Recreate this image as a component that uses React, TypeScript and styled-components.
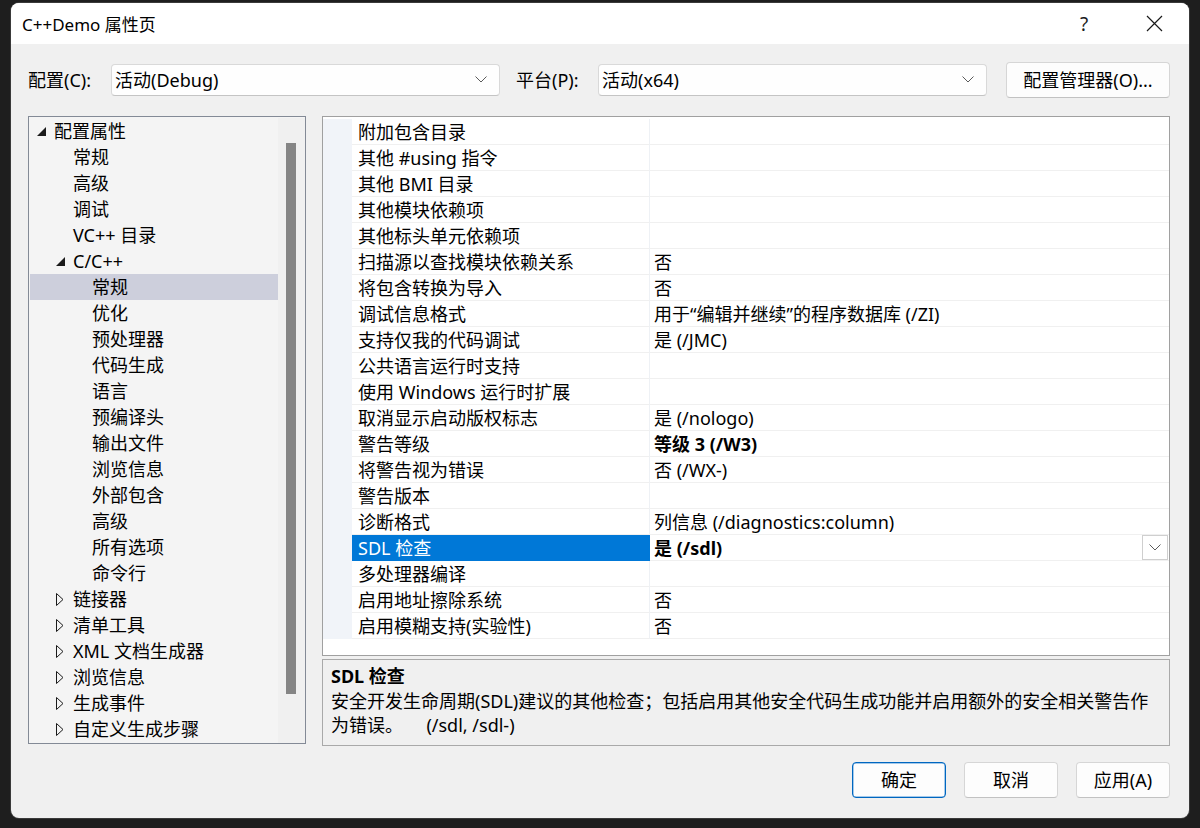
import React from 'react'
import styled, { createGlobalStyle, css } from 'styled-components'

const GlobalStyle = createGlobalStyle`
  html, body {
    margin: 0;
    padding: 0;
    background: #1e1e1e;
  }
  body {
    font-family: "Noto Sans", "Noto Sans CJK SC", sans-serif;
    color: #000;
  }
  * { box-sizing: border-box; }
`

const Backdrop = styled.div`
  width: 1200px;
  height: 828px;
  padding: 3px 11px 10px 11px;
  background: #1e1e1e;
  overflow: hidden;
`

const Dialog = styled.div`
  width: 1178px;
  height: 815px;
  border-radius: 8px;
  background: #f0f0f0;
  overflow: hidden;
  display: flex;
  flex-direction: column;
  box-shadow: 0 0 0 1px #3a3a3a;
`

const TitleBar = styled.div`
  height: 41px;
  flex: none;
  background: #ffffff;
  display: flex;
  align-items: center;
  padding-left: 11px;
`

const Title = styled.div`
  flex: 1;
  font-size: 17px;
  line-height: 20px;
  padding-top: 2px;
`

const CaptionButton = styled.div`
  width: 70px;
  height: 41px;
  display: flex;
  align-items: center;
  justify-content: center;
  font-size: 19px;
  color: #1a1a1a;
`

const Body = styled.div`
  flex: 1;
  display: flex;
  flex-direction: column;
  padding: 18px 19px 20px 17px;
`

const ConfigRow = styled.div`
  height: 35px;
  display: flex;
  align-items: center;
`

const FieldLabel = styled.div<{ $w: number; $gap?: number }>`
  width: ${(p) => p.$w}px;
  padding-left: ${(p) => p.$gap ?? 0}px;
  font-size: 18px;
  line-height: 22px;
  flex: none;
`

const Combo = styled.div`
  width: 389px;
  height: 32px;
  flex: none;
  background: #fefefe;
  border: 1px solid #d9d9d9;
  border-bottom-color: #c4c4c4;
  border-radius: 4px;
  display: flex;
  align-items: center;
  padding: 0 12px 0 3px;
  font-size: 18px;
`

const ComboText = styled.div`
  flex: 1;
  line-height: 22px;
`

const Spacer = styled.div`
  flex: 1;
`

const DialogButton = styled.div<{ $primary?: boolean; $w: number }>`
  width: ${(p) => p.$w}px;
  height: 36px;
  flex: none;
  background: #fdfdfd;
  border: 1px solid #d6d6d6;
  border-bottom-color: #c2c2c2;
  border-radius: 4px;
  display: flex;
  align-items: center;
  justify-content: center;
  font-size: 18px;
  line-height: 22px;
  ${(p) =>
    p.$primary &&
    css`
      border-color: #0067c0;
      box-shadow: inset 0 0 0 0.5px #4c96d8;
    `}
`

const Main = styled.div`
  margin-top: 19px;
  height: 630px;
  display: flex;
  gap: 16px;
`

const TreePanel = styled.div`
  width: 278px;
  height: 628px;
  flex: none;
  border: 1px solid #838a96;
  background: #f4f4f4;
  display: flex;
  padding: 1px 0 0 1px;
`

const TreeList = styled.div`
  flex: 1;
  display: flex;
  flex-direction: column;
`

const TreeRow = styled.div<{ $level: number; $selected?: boolean }>`
  height: 26px;
  flex: none;
  display: flex;
  align-items: center;
  padding-left: ${(p) => 7 + p.$level * 19}px;
  background: ${(p) => (p.$selected ? '#cdcfdc' : 'transparent')};
  font-size: 18px;
  line-height: 22px;
  white-space: nowrap;
`

const Expander = styled.div`
  width: 17px;
  height: 26px;
  flex: none;
  display: flex;
  align-items: center;
  justify-content: flex-start;
`

const ScrollTrack = styled.div`
  width: 27px;
  flex: none;
  background: #f0f0f0;
  padding: 25px 0 0 8px;
`

const ScrollThumb = styled.div`
  width: 10px;
  height: 551px;
  background: #858585;
`

const RightColumn = styled.div`
  width: 848px;
  flex: none;
  display: flex;
  flex-direction: column;
  gap: 3px;
`

const Grid = styled.div`
  height: 540px;
  flex: none;
  border: 1px solid #a0a0a0;
  background: #ffffff;
  padding-top: 2px;
  display: flex;
  flex-direction: column;
`

const GridRow = styled.div`
  height: 26px;
  flex: none;
  display: grid;
  grid-template-columns: 29px 298px 1fr;
`

const Margin = styled.div`
  background: #f1f4f9;
`

const NameCell = styled.div<{ $selected?: boolean }>`
  display: flex;
  align-items: center;
  padding: 1px 0 0 6px;
  font-size: 18px;
  line-height: 22px;
  white-space: nowrap;
  border-bottom: 1px solid #f0f0f0;
  border-right: 1px solid #eef1f5;
  ${(p) =>
    p.$selected &&
    css`
      background: #0078d7;
      color: #ffffff;
      border-bottom-color: #0078d7;
      border-right-color: #0078d7;
    `}
`

const ValueCell = styled.div<{ $bold?: boolean }>`
  display: flex;
  align-items: center;
  padding: 1px 0 0 4px;
  font-size: 18px;
  line-height: 22px;
  white-space: nowrap;
  border-bottom: 1px solid #f0f0f0;
  font-weight: ${(p) => (p.$bold ? 700 : 400)};
`

const ValueText = styled.div`
  flex: 1;
`

const CellDrop = styled.div`
  width: 26px;
  height: 25px;
  margin: -1px 1px 0 0;
  border: 1px solid #cfcfcf;
  background: #ffffff;
  display: flex;
  align-items: center;
  justify-content: center;
`

const Description = styled.div`
  height: 87px;
  flex: none;
  border: 1px solid #a9a9a9;
  background: #f0f0f0;
  padding: 3px 8px 0 8px;
`

const DescTitle = styled.div`
  font-size: 18px;
  line-height: 26px;
  font-weight: 700;
`

const DescText = styled.div`
  font-size: 18px;
  line-height: 24px;
  white-space: pre;
`

const ButtonRow = styled.div`
  margin-top: 16px;
  display: flex;
  justify-content: flex-end;
  gap: 18px;
`

type TreeItem = { label: string; level: number; kind?: 'open' | 'closed'; selected?: boolean }

const tree: TreeItem[] = [
  { label: '配置属性', level: 0, kind: 'open' },
  { label: '常规', level: 1 },
  { label: '高级', level: 1 },
  { label: '调试', level: 1 },
  { label: 'VC++ 目录', level: 1 },
  { label: 'C/C++', level: 1, kind: 'open' },
  { label: '常规', level: 2, selected: true },
  { label: '优化', level: 2 },
  { label: '预处理器', level: 2 },
  { label: '代码生成', level: 2 },
  { label: '语言', level: 2 },
  { label: '预编译头', level: 2 },
  { label: '输出文件', level: 2 },
  { label: '浏览信息', level: 2 },
  { label: '外部包含', level: 2 },
  { label: '高级', level: 2 },
  { label: '所有选项', level: 2 },
  { label: '命令行', level: 2 },
  { label: '链接器', level: 1, kind: 'closed' },
  { label: '清单工具', level: 1, kind: 'closed' },
  { label: 'XML 文档生成器', level: 1, kind: 'closed' },
  { label: '浏览信息', level: 1, kind: 'closed' },
  { label: '生成事件', level: 1, kind: 'closed' },
  { label: '自定义生成步骤', level: 1, kind: 'closed' },
]

type Prop = { name: string; value?: string; bold?: boolean; selected?: boolean }

const props: Prop[] = [
  { name: '附加包含目录' },
  { name: '其他 #using 指令' },
  { name: '其他 BMI 目录' },
  { name: '其他模块依赖项' },
  { name: '其他标头单元依赖项' },
  { name: '扫描源以查找模块依赖关系', value: '否' },
  { name: '将包含转换为导入', value: '否' },
  { name: '调试信息格式', value: '用于“编辑并继续”的程序数据库 (/ZI)' },
  { name: '支持仅我的代码调试', value: '是 (/JMC)' },
  { name: '公共语言运行时支持' },
  { name: '使用 Windows 运行时扩展' },
  { name: '取消显示启动版权标志', value: '是 (/nologo)' },
  { name: '警告等级', value: '等级 3 (/W3)', bold: true },
  { name: '将警告视为错误', value: '否 (/WX-)' },
  { name: '警告版本' },
  { name: '诊断格式', value: '列信息 (/diagnostics:column)' },
  { name: 'SDL 检查', value: '是 (/sdl)', bold: true, selected: true },
  { name: '多处理器编译' },
  { name: '启用地址擦除系统', value: '否' },
  { name: '启用模糊支持(实验性)', value: '否' },
]

function Chevron() {
  return (
    <svg width="12" height="7" viewBox="0 0 12 7">
      <polyline points="0.5,0.5 6,6 11.5,0.5" fill="none" stroke="#5a5a5a" strokeWidth="1" />
    </svg>
  )
}

function OpenArrow() {
  return (
    <svg width="9" height="9" viewBox="0 0 9 9">
      <polygon points="9,0 9,9 0,9" fill="#1a1a1a" />
    </svg>
  )
}

function ClosedArrow() {
  return (
    <svg width="8" height="13" viewBox="0 0 8 13">
      <polygon points="0.5,0.5 7,6.5 0.5,12.5" fill="none" stroke="#1a1a1a" strokeWidth="1" />
    </svg>
  )
}

function CloseGlyph() {
  return (
    <svg width="17" height="17" viewBox="0 0 17 17">
      <path d="M1 1 L16 16 M16 1 L1 16" stroke="#1a1a1a" strokeWidth="1.2" fill="none" />
    </svg>
  )
}

export default function App() {
  return (
    <>
      <GlobalStyle />
      <Backdrop>
        <Dialog>
          <TitleBar>
            <Title>C++Demo 属性页</Title>
            <CaptionButton>?</CaptionButton>
            <CaptionButton>
              <CloseGlyph />
            </CaptionButton>
          </TitleBar>
          <Body>
            <ConfigRow>
              <FieldLabel $w={83}>配置(C):</FieldLabel>
              <Combo>
                <ComboText>活动(Debug)</ComboText>
                <Chevron />
              </Combo>
              <FieldLabel $w={98} $gap={16}>平台(P):</FieldLabel>
              <Combo>
                <ComboText>活动(x64)</ComboText>
                <Chevron />
              </Combo>
              <Spacer />
              <DialogButton $w={164}>配置管理器(O)...</DialogButton>
            </ConfigRow>
            <Main>
              <TreePanel>
                <TreeList>
                  {tree.map((t, i) => (
                    <TreeRow key={i} $level={t.level} $selected={t.selected}>
                      <Expander>
                        {t.kind === 'open' && <OpenArrow />}
                        {t.kind === 'closed' && <ClosedArrow />}
                      </Expander>
                      {t.label}
                    </TreeRow>
                  ))}
                </TreeList>
                <ScrollTrack>
                  <ScrollThumb />
                </ScrollTrack>
              </TreePanel>
              <RightColumn>
                <Grid>
                  {props.map((p, i) => (
                    <GridRow key={i}>
                      <Margin />
                      <NameCell $selected={p.selected}>{p.name}</NameCell>
                      <ValueCell $bold={p.bold}>
                        <ValueText>{p.value ?? ''}</ValueText>
                        {p.selected && (
                          <CellDrop>
                            <Chevron />
                          </CellDrop>
                        )}
                      </ValueCell>
                    </GridRow>
                  ))}
                </Grid>
                <Description>
                  <DescTitle>SDL 检查</DescTitle>
                  <DescText>
                    安全开发生命周期(SDL)建议的其他检查；包括启用其他安全代码生成功能并启用额外的安全相关警告作
                    {'\n'}为错误。     (/sdl, /sdl-)
                  </DescText>
                </Description>
              </RightColumn>
            </Main>
            <ButtonRow>
              <DialogButton $w={94} $primary>确定</DialogButton>
              <DialogButton $w={94}>取消</DialogButton>
              <DialogButton $w={94}>应用(A)</DialogButton>
            </ButtonRow>
          </Body>
        </Dialog>
      </Backdrop>
    </>
  )
}
